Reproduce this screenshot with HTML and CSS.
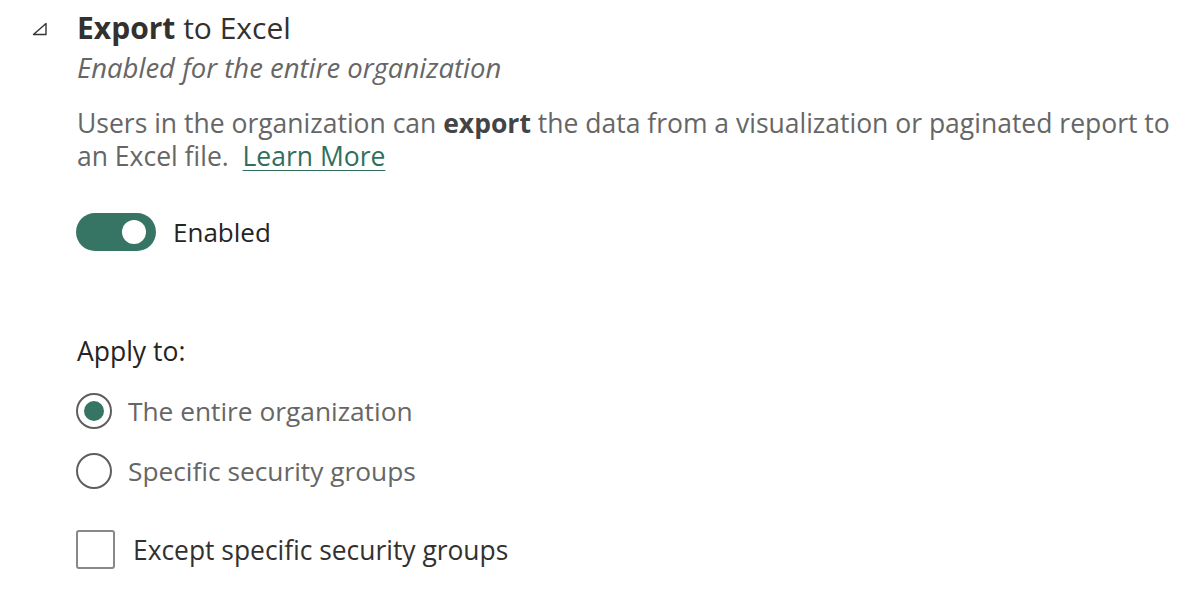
FILE: index.html
```html
<!DOCTYPE html>
<html>
<head>
<meta charset="utf-8">
<link rel="stylesheet" href="styles.css">
</head>
<body>
<div class="setting">
  <div class="head">
    <svg class="caret" width="16" height="14" viewBox="0 0 16 14"><path d="M1.5 12.5 L14 1.5 L14 12.5 Z" fill="none" stroke="#333" stroke-width="1.4" stroke-linejoin="round"/></svg>
    <div class="titles">
      <div class="title"><b>Export</b> to Excel</div>
      <div class="subtitle">Enabled for the entire organization</div>
    </div>
  </div>
  <div class="body">
    <p class="desc">Users in the organization can <b class="strong">export</b> the data from a visualization or paginated report to an Excel file.&nbsp; <a class="link" href="#">Learn More</a></p>
    <div class="toggle-row">
      <span class="toggle"><span class="knob"></span></span>
      <span class="toggle-label">Enabled</span>
    </div>
    <div class="apply">Apply to:</div>
    <div class="radio-row">
      <span class="radio checked"><span class="dot"></span></span>
      <span class="radio-label">The entire organization</span>
    </div>
    <div class="radio-row">
      <span class="radio"></span>
      <span class="radio-label">Specific security groups</span>
    </div>
    <div class="check-row">
      <span class="checkbox"></span>
      <span class="check-label">Except specific security groups</span>
    </div>
  </div>
</div>
</body>
</html>
```
FILE: styles.css
```css
html, body {
  margin: 0;
  padding: 0;
  background: #fff;
}
body {
  font-family: "Open Sans", "Noto Sans", sans-serif;
  color: #323130;
}
.setting {
  padding: 9px 0 0 32px;
}
.head {
  display: flex;
  align-items: flex-start;
  gap: 29px;
}
.caret {
  margin-top: 13px;
  flex: none;
}
.title {
  font-size: 30px;
  line-height: 38px;
  color: #323130;
}
.title b {
  font-weight: 700;
}
.subtitle {
  font-size: 27.5px;
  line-height: 36px;
  font-style: italic;
  color: #666;
  margin-top: 3px;
}
.body {
  padding-left: 45px;
}
.desc {
  margin: 21px 0 0 0;
  font-size: 26.5px;
  line-height: 33px;
  color: #666;
  max-width: 1110px;
}
.strong {
  display: inline-block;
  color: #444;
}
.link {
  display: inline-block;
  color: #2f6f5d;
  text-decoration: underline;
  text-underline-offset: 4px;
  text-decoration-thickness: 1px;
}
.toggle-row {
  display: flex;
  align-items: center;
  gap: 17px;
  margin-top: 40px;
}
.toggle {
  width: 80px;
  height: 38px;
  border-radius: 19px;
  background: #367564;
  display: flex;
  align-items: center;
  justify-content: flex-end;
  padding-right: 10px;
  box-sizing: border-box;
  margin-left: -1px;
}
.knob {
  width: 24px;
  height: 24px;
  border-radius: 50%;
  background: #fff;
}
.toggle-label {
  font-size: 26px;
  color: #252423;
}
.apply {
  margin-top: 83px;
  font-size: 26.5px;
  line-height: 34px;
  color: #252423;
}
.radio-row {
  display: flex;
  align-items: center;
  gap: 16px;
  margin-top: 25px;
}
.radio-row + .radio-row {
  margin-top: 24px;
}
.radio {
  width: 36px;
  height: 36px;
  border: 2px solid #605e5c;
  border-radius: 50%;
  box-sizing: border-box;
  display: flex;
  align-items: center;
  justify-content: center;
  margin-left: -1px;
}
.dot {
  width: 20px;
  height: 20px;
  border-radius: 50%;
  background: #367564;
}
.radio-label {
  font-size: 26.3px;
  color: #666;
}
.check-row {
  display: flex;
  align-items: center;
  gap: 18px;
  margin-top: 41px;
}
.checkbox {
  width: 39px;
  height: 39px;
  border: 2px solid #8a8886;
  border-radius: 3px;
  box-sizing: border-box;
  margin-left: -1px;
}
.check-label {
  font-size: 26.4px;
  color: #323130;
}
```
